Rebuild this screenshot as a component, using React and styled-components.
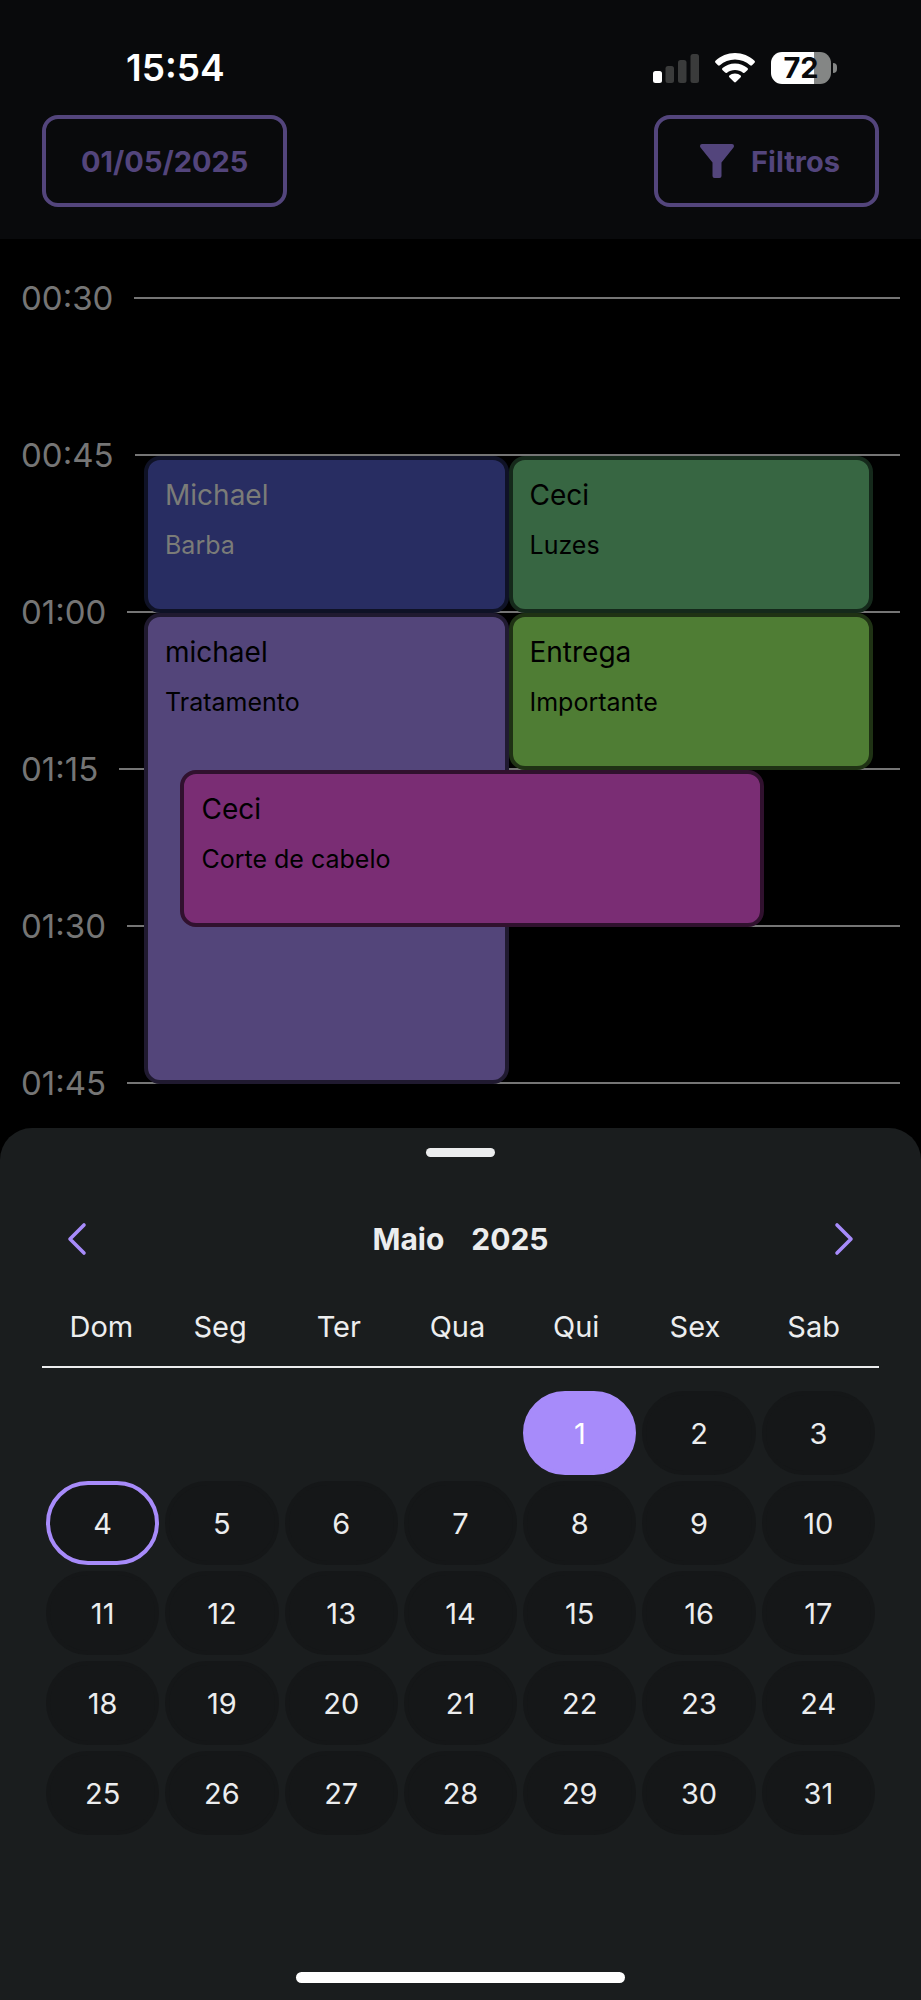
import React, { useState } from "react";
import styled, { createGlobalStyle } from "styled-components";

const accent = "#a78bfa";
const accentDim = "#53457c";
const light = "#ecedee";

const GlobalStyle = createGlobalStyle`
  *, *::before, *::after { box-sizing: border-box; }
  body {
    margin: 0;
    background: #000;
    color: ${light};
    font-family: Inter, "Liberation Sans", sans-serif;
  }
  button { font: inherit; color: inherit; cursor: pointer; }
`;

const Screen = styled.div`
  display: flex;
  flex-direction: column;
  min-height: 100vh;
`;

const Header = styled.header`
  background: #090a0c;
  padding-bottom: 32px;
`;

const StatusBar = styled.div`
  display: flex;
  align-items: center;
  justify-content: space-between;
  height: 115px;
  padding: 20px 84px 0 126px;
`;

const Clock = styled.time`
  color: #fff;
  font-size: 37px;
  font-weight: 600;
  line-height: 44px;
`;

const StatusIcons = styled.div`
  display: flex;
  align-items: center;
  gap: 16px;
  color: #fff;
`;

const Battery = styled.div`
  display: flex;
  align-items: center;
  gap: 2px;
`;

const BatteryLevel = styled.span`
  width: 60px;
  height: 32px;
  border-radius: 11px;
  background: linear-gradient(to right, #fff 72%, #848685 72%);
  color: #090a0c;
  font-size: 29px;
  font-weight: 700;
  line-height: 32px;
  text-align: center;
`;

const BatteryTip = styled.span`
  width: 4px;
  height: 10px;
  border-radius: 0 5px 5px 0;
  background: #848685;
`;

const Toolbar = styled.div`
  display: flex;
  justify-content: space-between;
  padding: 0 42px;
`;

const OutlineButton = styled.button`
  display: flex;
  align-items: center;
  gap: 10px;
  height: 92px;
  padding: 0 35px;
  border: 4px solid ${accentDim};
  border-radius: 16px;
  background: transparent;
  color: ${accentDim};
  font-size: 29px;
  font-weight: 700;
`;

const Timeline = styled.main`
  display: grid;
  padding-bottom: 25px;
`;

const Slots = styled.div`
  grid-area: 1 / 1;
  display: flex;
  flex-direction: column;
  gap: 117px;
  padding: 39px 21px 0;
`;

const Slot = styled.div`
  display: flex;
  align-items: center;
  gap: 21px;
  height: 40px;
  color: #757575;
  font-size: 33px;

  &::after {
    content: "";
    flex: 1;
    height: 2px;
    background: #757575;
  }
`;

const Events = styled.div`
  grid-area: 1 / 1;
  align-self: start;
  display: grid;
  grid-template-columns: repeat(20, 1fr);
  grid-auto-rows: 157px;
  padding: 217px 48px 0 144px;
`;

const EventCard = styled.article`
  grid-column: ${(p) => p.$columns};
  grid-row: ${(p) => p.$rows};
  padding: 17px;
  border: 4px solid ${(p) => p.$edge};
  border-radius: 16px;
  background: ${(p) => p.$fill};
  color: ${(p) => p.$ink || "#000"};
`;

const EventTitle = styled.h3`
  margin: 0 0 16px;
  font-size: 28px;
  font-weight: 400;
  line-height: 36px;
`;

const EventDetail = styled.p`
  margin: 0;
  font-size: 25px;
  line-height: 32px;
`;

const Sheet = styled.section`
  flex: 1;
  display: flex;
  flex-direction: column;
  padding: 20px 42px 17px;
  border-radius: 32px 32px 0 0;
  background: #1a1d1e;
`;

const Handle = styled.div`
  align-self: center;
  width: 69px;
  height: 9px;
  border-radius: 5px;
  background: ${light};
`;

const MonthBar = styled.div`
  display: flex;
  align-items: center;
  justify-content: space-between;
  height: 64px;
  margin-top: 50px;
`;

const NavButton = styled.button`
  display: flex;
  align-items: center;
  justify-content: center;
  width: 70px;
  height: 64px;
  padding: 0;
  border: 0;
  background: transparent;
  color: ${accent};
`;

const MonthTitle = styled.h2`
  display: flex;
  gap: 27px;
  margin: 0;
  font-size: 30px;
  font-weight: 700;
  line-height: 40px;
`;

const Weekdays = styled.div`
  display: grid;
  grid-template-columns: repeat(7, 1fr);
  margin-top: 36px;
  padding: 0 6px 19px 0;
  border-bottom: 2px solid ${light};
  font-size: 29px;
  line-height: 40px;
  text-align: center;
`;

const Days = styled.div`
  display: grid;
  grid-template-columns: repeat(7, 1fr);
  gap: 6px;
  margin: 23px 4px 48px;
`;

const Day = styled.button`
  grid-column-start: ${(p) => p.$start || "auto"};
  height: 84px;
  padding: 0;
  border: 4px solid ${(p) => (p.$selected || p.$today ? accent : "#151718")};
  border-radius: 42px;
  background: ${(p) => (p.$selected ? accent : "#151718")};
  color: ${(p) => (p.$selected ? "#fff" : light)};
  font-size: 29px;
`;

const HomeIndicator = styled.div`
  align-self: center;
  width: 329px;
  height: 11px;
  margin-top: auto;
  border-radius: 6px;
  background: #fff;
`;

const SignalIcon = () => (
  <svg width="46" height="30" viewBox="0 0 46 30" fill="currentColor" aria-hidden="true">
    <rect x="0" y="18" width="9" height="12" rx="2.5" />
    <g fill="#3a3b3b">
      <rect x="12.5" y="13" width="8.5" height="17" rx="2.5" />
      <rect x="25" y="7" width="8.5" height="23" rx="2.5" />
      <rect x="37.5" y="1" width="8.5" height="29" rx="2.5" />
    </g>
  </svg>
);

const WifiIcon = () => (
  <svg width="40" height="30" viewBox="0 0 40 30" fill="currentColor" aria-hidden="true">
    <path d="M20 0C27.5 0 34.3 3 39.5 7.800Q40.400 8.800 39.500 9.800L37 12.300Q36.100 13.200 35.100 12.300C31 8.700 25.800 6.600 20 6.600S9 8.700 4.900 12.300Q3.900 13.200 3 12.300L.5 9.800Q-.4 8.800.5 7.800C5.700 3 12.500 0 20 0Z" />
    <path d="M20 10.400C24.800 10.400 29.100 12.200 32.500 15.100Q33.500 16.100 32.600 17L29.900 19.600Q29 20.500 28 19.700C25.800 17.900 23 16.900 20 16.900S14.200 17.900 12 19.700Q11 20.500 10.100 19.600L7.400 17Q6.500 16.100 7.500 15.100C10.900 12.200 15.200 10.400 20 10.400Z" />
    <path d="M20 20.600C22.200 20.600 24.200 21.400 25.700 22.600Q26.500 23.400 25.700 24.200L20.900 29Q20 29.800 19.100 29L14.300 24.200Q13.500 23.400 14.300 22.600C15.800 21.400 17.800 20.600 20 20.600Z" />
  </svg>
);

const FunnelIcon = () => (
  <svg width="48" height="48" viewBox="0 0 48 48" fill="currentColor" aria-hidden="true">
    <path d="M9 7H39Q41 7 41 9Q41 9.700 40.500 10.400L28.500 25.500V39Q28.500 41 26.500 41H21.500Q19.500 41 19.500 39V25.500L7.500 10.400Q7 9.700 7 9Q7 7 9 7Z" />
  </svg>
);

const Chevron = ({ points }) => (
  <svg width="20" height="34" viewBox="0 0 20 34" fill="none" stroke="currentColor" strokeWidth="3.6" strokeLinecap="round" strokeLinejoin="round" aria-hidden="true">
    <polyline points={points} />
  </svg>
);

const slots = ["00:30", "00:45", "01:00", "01:15", "01:30", "01:45"];
const weekdays = ["Dom", "Seg", "Ter", "Qua", "Qui", "Sex", "Sab"];
const days = Array.from({ length: 31 }, (_, i) => i + 1);

const events = [
  { title: "Michael", detail: "Barba", columns: "1 / 11", rows: "1 / 2", fill: "#282d62", edge: "#0f1226", ink: "#7b7c78" },
  { title: "Ceci", detail: "Luzes", columns: "11 / 21", rows: "1 / 2", fill: "#376642", edge: "#15291b" },
  { title: "michael", detail: "Tratamento", columns: "1 / 11", rows: "2 / 5", fill: "#53457a", edge: "#201a30" },
  { title: "Entrega", detail: "Importante", columns: "11 / 21", rows: "2 / 3", fill: "#4f7d34", edge: "#1f3214" },
  { title: "Ceci", detail: "Corte de cabelo", columns: "2 / 18", rows: "3 / 4", fill: "#7a2d74", edge: "#30112e" },
];

export default function App() {
  const [selected, setSelected] = useState(1);

  return (
    <>
      <GlobalStyle />
      <Screen>
        <Header>
          <StatusBar>
            <Clock>15:54</Clock>
            <StatusIcons>
              <SignalIcon />
              <WifiIcon />
              <Battery>
                <BatteryLevel>72</BatteryLevel>
                <BatteryTip />
              </Battery>
            </StatusIcons>
          </StatusBar>
          <Toolbar>
            <OutlineButton type="button">
              {String(selected).padStart(2, "0")}/05/2025
            </OutlineButton>
            <OutlineButton type="button">
              <FunnelIcon />
              Filtros
            </OutlineButton>
          </Toolbar>
        </Header>

        <Timeline>
          <Slots>
            {slots.map((slot) => (
              <Slot key={slot}>{slot}</Slot>
            ))}
          </Slots>
          <Events>
            {events.map((e) => (
              <EventCard key={e.title + e.detail} $columns={e.columns} $rows={e.rows} $fill={e.fill} $edge={e.edge} $ink={e.ink}>
                <EventTitle>{e.title}</EventTitle>
                <EventDetail>{e.detail}</EventDetail>
              </EventCard>
            ))}
          </Events>
        </Timeline>

        <Sheet>
          <Handle />
          <MonthBar>
            <NavButton type="button" aria-label="Mês anterior">
              <Chevron points="17,3 3,17 17,31" />
            </NavButton>
            <MonthTitle>
              <span>Maio</span>
              <span>2025</span>
            </MonthTitle>
            <NavButton type="button" aria-label="Próximo mês">
              <Chevron points="3,3 17,17 3,31" />
            </NavButton>
          </MonthBar>
          <Weekdays>
            {weekdays.map((name) => (
              <span key={name}>{name}</span>
            ))}
          </Weekdays>
          <Days>
            {days.map((day) => (
              <Day
                key={day}
                type="button"
                $start={day === 1 ? 5 : undefined}
                $selected={day === selected}
                $today={day === 4}
                aria-pressed={day === selected}
                onClick={() => setSelected(day)}
              >
                {day}
              </Day>
            ))}
          </Days>
          <HomeIndicator />
        </Sheet>
      </Screen>
    </>
  );
}
